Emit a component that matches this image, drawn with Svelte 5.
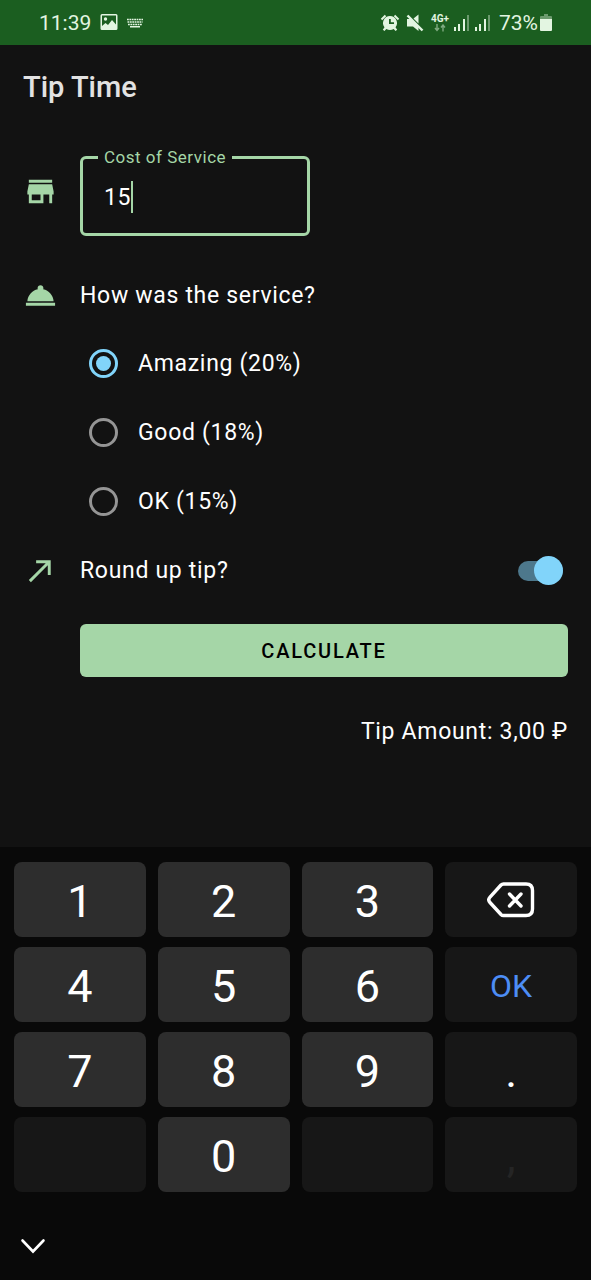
<script>
  let cost = $state('15');
  let service = $state('20');
  let roundUp = $state(true);
  let amount = $state('3,00');

  const options = [
    { label: 'Amazing (20%)', value: '20' },
    { label: 'Good (18%)', value: '18' },
    { label: 'OK (15%)', value: '15' }
  ];

  const keys = ['1', '2', '3', 'back', '4', '5', '6', 'OK', '7', '8', '9', '.', '', '0', '', ','];

  function calculate() {
    let tip = (parseFloat(cost) || 0) * Number(service) / 100;
    if (roundUp) tip = Math.ceil(tip);
    amount = tip.toFixed(2).replace('.', ',');
  }

  function press(key) {
    if (key === 'back') cost = cost.slice(0, -1);
    else if (key === 'OK') calculate();
    else cost += key;
  }
</script>

<div class="screen">
  <header class="status">
    <span class="clock">11:39</span>
    <svg class="picture" width="18" height="18" viewBox="0 0 18 18" aria-hidden="true">
      <path fill-rule="evenodd" d="M2 0h14a1.500 1.500 0 0 1 1.500 1.500v13A1.500 1.500 0 0 1 16 16H2a1.500 1.500 0 0 1-1.500-1.500v-13A1.500 1.500 0 0 1 2 0zm0 1.500v10.500l3.500-3 2.500 2 4-5 4 4.500v-9z" />
      <circle cx="5.500" cy="5" r="1.700" />
    </svg>
    <svg class="keyboard-icon" width="18" height="10" viewBox="0 0 18 10" aria-hidden="true">
      <path d="M1 1.500h16M1.500 4h15M2 6.500h14" fill="none" stroke="currentColor" stroke-width="1.700" stroke-dasharray="1.800 .6" />
      <path d="M4 8h10v1.500H4z" />
    </svg>
    <span class="spacer"></span>
    <svg width="20" height="20" viewBox="0 0 20 20" aria-hidden="true">
      <path fill-rule="evenodd" d="M10 3a7 7 0 0 1 5.500 11.300l1.700 2.500-1.700 1.200-1.800-2.100a7 7 0 0 1-7.400 0L4.500 18l-1.700-1.200 1.700-2.500A7 7 0 0 1 10 3zM9 6v5h5V9.300h-3.200V6z" />
      <path d="M1.500 6.500 5.500 2.500M18.500 6.500l-4-4" stroke="currentColor" stroke-width="2" />
    </svg>
    <svg class="mute" width="18" height="20" viewBox="0 0 18 20" aria-hidden="true">
      <path d="M1 6h4l7.500 7.500V18L7 13.500H1zM7.500 5.500 12.500 1.500v9z" />
      <path d="m1.500 2.500 15 15" stroke="currentColor" stroke-width="2.400" />
    </svg>
    <span class="network">
      <span>4G+</span>
      <svg width="12" height="8" viewBox="0 0 12 8" aria-hidden="true">
        <path d="M3 0v6M1 4l2 2.500L5 4M9 7.500v-6M7 3.500 9 1l2 2.500" fill="none" stroke="currentColor" stroke-width="1.400" />
      </svg>
    </span>
    {#each [0, 1] as sim (sim)}
      <svg class="signal" width="16" height="17" viewBox="0 0 16 17" aria-hidden="true">
        <path d="M0 13h2v4H0zM4 10h2v7H4zM9 5h2v12H9z" />
        <path d="M13 1h2v16h-2z" opacity=".4" />
      </svg>
    {/each}
    <span class="percent">73%</span>
    <svg width="12" height="18" viewBox="0 0 12 18" aria-hidden="true">
      <path d="M4 0h4v2h3a1 1 0 0 1 1 1v3H0V3a1 1 0 0 1 1-1h3z" opacity=".4" />
      <path d="M0 5h12v11a1 1 0 0 1-1 1H1a1 1 0 0 1-1-1z" />
    </svg>
  </header>

  <h1>Tip Time</h1>

  <main>
    <div class="row">
      <svg class="icon" viewBox="0 0 24 24" aria-hidden="true">
        <path d="M20 4H4v2h16V4zm1 10v-2l-1-5H4l-1 5v2h1v6h10v-6h4v6h2v-6h1zm-9 4H6v-4h6v4z" />
      </svg>
      <fieldset class="field">
        <legend><label for="cost">Cost of Service</label></legend>
        <div class="value">
          <input id="cost" type="text" inputmode="decimal" bind:value={cost} />
          <span class="caret"></span>
        </div>
      </fieldset>
    </div>

    <div class="row question">
      <svg class="icon" viewBox="0 0 24 24" aria-hidden="true">
        <path d="M2 17h20v2H2zm11.840-9.210c.1-.24.16-.51.16-.79 0-1.100-.9-2-2-2s-2 .9-2 2c0 .28.06.55.16.79C6.250 8.600 3.270 11.930 3 16h18c-.27-4.070-3.250-7.400-7.160-8.210z" />
      </svg>
      <span id="service-question">How was the service?</span>
    </div>

    <div class="options" role="radiogroup" aria-labelledby="service-question">
      {#each options as option (option.value)}
        <label class="option">
          <input type="radio" name="service" value={option.value} bind:group={service} />
          <span>{option.label}</span>
        </label>
      {/each}
    </div>

    <div class="row round">
      <svg class="icon" viewBox="0 0 24 24" aria-hidden="true">
        <path d="M9 5v2h6.590L4 18.590 5.410 20 17 8.410V15h2V5z" />
      </svg>
      <label for="round-up">Round up tip?</label>
      <input id="round-up" class="switch" type="checkbox" role="switch" bind:checked={roundUp} />
    </div>

    <div class="result">
      <button class="calculate" type="button" onclick={calculate}>CALCULATE</button>
      <output>Tip Amount: {amount} ₽</output>
    </div>
  </main>

  <section class="keyboard">
    <div class="keys">
      {#each keys as key, i (i)}
        <button
          type="button"
          class="key"
          class:digit={key >= '0' && key <= '9'}
          class:back={key === 'back'}
          class:ok={key === 'OK'}
          class:faint={key === ','}
          disabled={key === '' || key === ','}
          aria-label={key === 'back' ? 'Backspace' : undefined}
          onclick={() => press(key)}
        >
          {#if key === 'back'}
            <svg width="48" height="36" viewBox="0 0 48 36" fill="none" stroke="currentColor" stroke-width="3.400" stroke-linecap="round" stroke-linejoin="round" aria-hidden="true">
              <path d="M16.500 2H39q6.500 0 6.500 6.500v18.500q0 6.500-6.500 6.500H16.500q-1.500 0-2.500-1L3 20.500q-2.500-2.700 0-5.400L14 3q1-1 2.500-1z" />
              <path d="m22.500 12 11.500 12M34 12 22.500 24" />
            </svg>
          {:else}
            {key}
          {/if}
        </button>
      {/each}
    </div>
    <button type="button" class="hide" aria-label="Hide keyboard">
      <svg width="26" height="16" viewBox="0 0 26 16" fill="none" stroke="currentColor" stroke-width="2.600" stroke-linecap="round" aria-hidden="true">
        <path d="m2.500 2.500 10.500 11 10.500-11" />
      </svg>
    </button>
  </section>
</div>

<style>
  :global(body) {
    margin: 0;
    background: #121212;
  }

  .screen {
    display: flex;
    flex-direction: column;
    min-height: 100vh;
    background: #121212;
    color: #fff;
    font-family: Roboto, sans-serif;
    font-size: 23px;
    line-height: 28px;
    letter-spacing: 0.03em;
  }

  svg {
    display: block;
    flex: none;
    fill: currentColor;
  }

  svg[fill='none'] {
    fill: none;
  }

  input,
  button {
    margin: 0;
    padding: 0;
    border: 0;
    background: none;
    color: inherit;
    font: inherit;
    letter-spacing: inherit;
  }

  .status {
    display: flex;
    align-items: center;
    height: 45px;
    padding: 0 39px;
    background: #1b5e20;
    color: #e3f5e1;
    font-size: 21px;
    letter-spacing: 0;
  }

  .picture {
    margin-left: 9px;
  }

  .keyboard-icon {
    margin-left: 8px;
  }

  .spacer {
    flex: 1;
  }

  .mute {
    margin: 0 7px 0 6px;
  }

  .network {
    display: flex;
    flex-direction: column;
    align-items: center;
    margin-right: 5px;
    font-size: 10px;
    font-weight: 700;
    line-height: 10px;
  }

  .network svg {
    opacity: 0.5;
  }

  .signal {
    margin-right: 5px;
  }

  .percent {
    margin: 0 2px 0 3px;
  }

  h1 {
    margin: 0;
    padding: 24px 23px;
    color: #e2e2e2;
    font-size: 29px;
    font-weight: 500;
    line-height: 36px;
    letter-spacing: 0;
  }

  main {
    flex: 1;
    padding: 18px 23px 0;
  }

  .row {
    display: flex;
    align-items: center;
    gap: 22px;
  }

  .icon {
    width: 35px;
    height: 35px;
    color: #a5d6a7;
  }

  .field {
    box-sizing: border-box;
    width: 230px;
    margin: 0;
    padding: 14px 15px 20px;
    border: 3px solid #a5d6a7;
    border-radius: 6px;
  }

  legend {
    padding: 0 6px;
    color: #a5d6a7;
    font-size: 17px;
    line-height: 20px;
    letter-spacing: 0.03em;
  }

  .value {
    display: flex;
    align-items: center;
    height: 32px;
    padding: 0 6px;
  }

  .value input {
    field-sizing: content;
    max-width: 180px;
    padding-top: 2px;
    outline: none;
    caret-color: transparent;
  }

  .caret {
    width: 2px;
    height: 32px;
    background: #a5d6a7;
  }

  .question {
    margin-top: 42px;
  }

  .options {
    margin-top: 16px;
    padding-left: 66px;
  }

  .option {
    display: flex;
    align-items: center;
    gap: 20px;
    height: 69px;
  }

  .option input {
    appearance: none;
    box-sizing: border-box;
    display: grid;
    place-items: center;
    width: 29px;
    height: 29px;
    border: 3px solid #959595;
    border-radius: 50%;
  }

  .option input:checked {
    border-color: #81d4fa;
  }

  .option input:checked::before {
    content: '';
    width: 15px;
    height: 15px;
    border-radius: 50%;
    background: #81d4fa;
  }

  .round {
    height: 69px;
  }

  .switch {
    appearance: none;
    display: flex;
    align-items: center;
    width: 45px;
    height: 20px;
    margin: 0 5px 0 auto;
    border-radius: 10px;
    background: #4d788c;
  }

  .switch::before {
    content: '';
    width: 29px;
    height: 29px;
    border-radius: 50%;
    background: #b9b9b9;
  }

  .switch:checked::before {
    margin-left: auto;
    background: #81d4fa;
  }

  .result {
    display: flex;
    flex-direction: column;
    gap: 41px;
    margin-top: 19px;
    padding-left: 57px;
  }

  .calculate {
    height: 53px;
    border-radius: 6px;
    background: #a5d6a7;
    color: #000;
    font-size: 20px;
    font-weight: 500;
    letter-spacing: 0.09em;
  }

  output {
    text-align: right;
  }

  .keyboard {
    padding: 15px 14px 16px;
    background: #090909;
  }

  .keys {
    display: grid;
    grid-template-columns: repeat(4, 1fr);
    gap: 10px 12px;
  }

  .key {
    display: flex;
    align-items: center;
    justify-content: center;
    height: 75px;
    padding-top: 4px;
    border-radius: 8px;
    background: #171717;
    font-size: 45px;
    letter-spacing: 0;
  }

  .digit {
    background: #2d2d2d;
  }

  .back {
    padding-top: 0;
  }

  .ok {
    padding-top: 2px;
    color: #4d8df5;
    font-size: 32px;
  }

  .faint {
    color: #252525;
  }

  .hide {
    display: flex;
    align-items: center;
    justify-content: center;
    width: 37px;
    height: 37px;
    margin-top: 35px;
  }
</style>
